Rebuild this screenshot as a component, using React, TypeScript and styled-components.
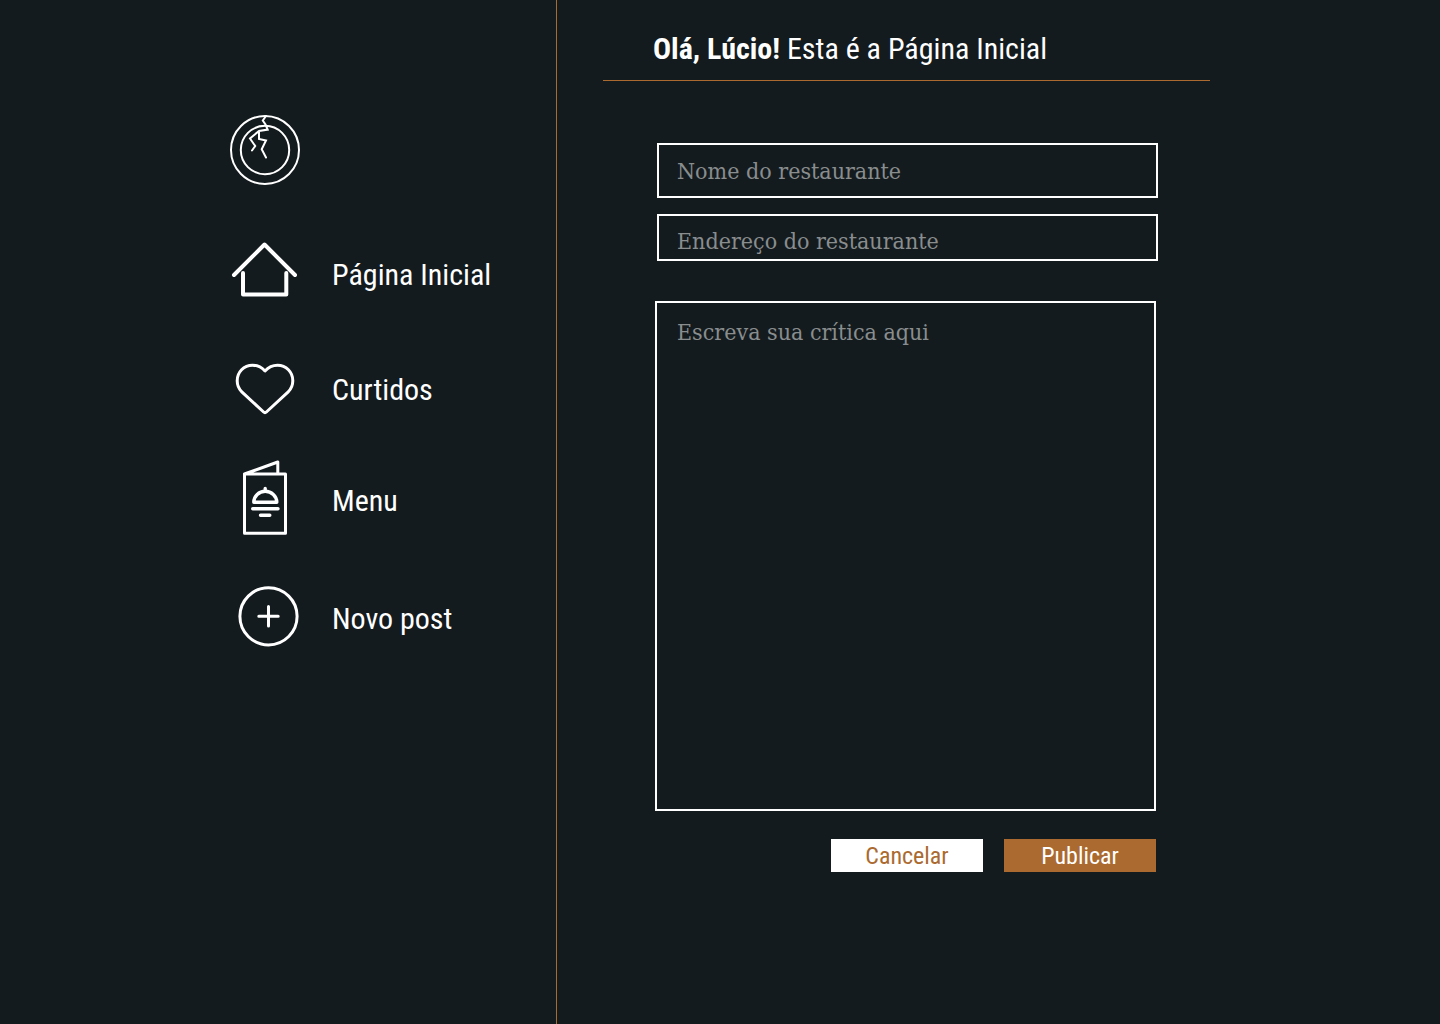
import React from "react";
import styled, { createGlobalStyle, css } from "styled-components";

const colors = {
  background: "#141b1e",
  accent: "#ab6a2f",
  text: "#ffffff",
  placeholder: "#898d8e",
};

const condensed = `"Roboto Condensed", Roboto, "Liberation Sans", sans-serif`;
const slab = `"DejaVu Serif Condensed", "DejaVu Serif", serif`;

const GlobalStyle = createGlobalStyle`
  *, *::before, *::after { box-sizing: border-box; }
  body {
    margin: 0;
    background: ${colors.background};
    color: ${colors.text};
    font-family: ${condensed};
  }
`;

const Page = styled.div`
  display: grid;
  grid-template-columns: minmax(340px, 557fr) minmax(0, 883fr);
  min-height: 100vh;
`;

const Sidebar = styled.aside`
  display: flex;
  flex-direction: column;
  align-items: flex-end;
  padding: 115px 62px 48px 0;
  border-right: 1px solid ${colors.accent};
`;

const SidebarContent = styled.div`
  width: 264px;
`;

const LogoLink = styled.a`
  display: block;
  width: 70px;
  height: 70px;
  margin-bottom: 50px;
`;

const Drawing = styled.svg<{ $weight: number }>`
  display: block;
  flex: none;
  overflow: visible;
  fill: none;
  stroke: ${colors.text};
  stroke-width: ${(p) => p.$weight}px;
  stroke-linecap: round;
  stroke-linejoin: round;
`;

const NavList = styled.ul`
  list-style: none;
  margin: 0;
  padding: 0;
`;

const NavItem = styled.li<{ $after: number }>`
  margin-bottom: ${(p) => p.$after}px;
`;

const NavLink = styled.a`
  display: flex;
  align-items: center;
  gap: 32px;
  height: 80px;
  color: inherit;
  font-size: 30px;
  line-height: 36px;
  text-decoration: none;
  white-space: nowrap;
`;

const Main = styled.main`
  padding: 0 46px 48px;
`;

const Header = styled.header`
  display: flex;
  align-items: center;
  max-width: 607px;
  min-height: 81px;
  padding: 18px 50px 0;
  border-bottom: 1px solid ${colors.accent};
`;

const Title = styled.h1`
  margin: 0;
  font-size: 30px;
  line-height: 36px;
  font-weight: 400;
`;

const Form = styled.form`
  max-width: 555px;
  padding: 62px 0 0 52px;
`;

const Fields = styled.div`
  display: grid;
  gap: 16px;
  margin: 0 0 40px 2px;
`;

const ReviewArea = styled.div`
  margin-right: 2px;
`;

const fieldStyle = css`
  display: block;
  width: 100%;
  border: 2px solid ${colors.text};
  border-radius: 0;
  outline: none;
  background: transparent;
  color: ${colors.text};
  font-family: ${slab};
  font-size: 23px;
  line-height: 32px;

  &::placeholder {
    color: ${colors.placeholder};
    opacity: 1;
  }
`;

const TextField = styled.input<{ $compact?: boolean }>`
  ${fieldStyle}
  height: ${(p) => (p.$compact ? 47 : 55)}px;
  padding: ${(p) => (p.$compact ? "6px 18px 0" : "0 18px")};
`;

const ReviewField = styled.textarea`
  ${fieldStyle}
  height: 510px;
  padding: 13px 20px;
  resize: none;
`;

const Actions = styled.div`
  display: flex;
  justify-content: flex-end;
  gap: 21px;
  margin-top: 28px;
`;

const ActionButton = styled.button<{ $primary?: boolean }>`
  width: 152px;
  height: 33px;
  padding: 0;
  border: 0;
  background: ${(p) => (p.$primary ? colors.accent : colors.text)};
  color: ${(p) => (p.$primary ? colors.text : colors.accent)};
  font-family: ${condensed};
  font-size: 24px;
  line-height: 32px;
  cursor: pointer;
`;

const PlateLogo = () => (
  <Drawing $weight={2} width="70" height="70" viewBox="0 0 70 70" aria-hidden="true">
    <circle cx="35" cy="35" r="34" />
    <circle cx="35" cy="35" r="24.2" />
    <path
      strokeLinejoin="miter"
      d="M36 1 32.8 5.5 35.5 9.5 37.7 14.6 29 16 20 23.5 25.2 31 22 35.5M29 16V24L36 25.5 31.7 34.3 36 42.5"
    />
  </Drawing>
);

const HomeIcon = () => (
  <Drawing $weight={4} width="70" height="80" viewBox="0 0 70 80" aria-hidden="true">
    <path d="M4 40 34.5 9.5 65 40" />
    <path d="M13 38V59.5H56.3V38" />
  </Drawing>
);

const HeartIcon = () => (
  <Drawing $weight={3} width="70" height="80" viewBox="0 0 70 80" aria-hidden="true">
    <path d="M35 21C31.5 17.2 27.3 15.3 22.5 15.3 13.8 15.3 7.2 22.2 7.2 30.8 7.2 35 8.9 39 11.8 41.8L33.6 62Q35 63.3 36.4 62L58.2 41.8C61.1 39 62.8 35 62.8 30.8 62.8 22.2 56.2 15.3 47.5 15.3 42.7 15.3 38.5 17.2 35 21Z" />
  </Drawing>
);

const MenuIcon = () => (
  <Drawing $weight={3} width="70" height="80" viewBox="0 0 70 80" aria-hidden="true">
    <path d="M14.5 13H55.5V72.3H14.5ZM14.5 13 47.8 1V13" />
    <path
      strokeWidth="3.4"
      d="M23.8 41.3C23.8 35 29 30.3 35.2 30.3S46.8 35 46.8 41.3ZM35.2 30V27.5M22.7 47.7H48M30.5 54.3H39.8"
    />
  </Drawing>
);

const NewPostIcon = () => (
  <Drawing $weight={3} width="70" height="80" viewBox="0 0 70 80" aria-hidden="true">
    <circle cx="38.5" cy="37.3" r="28.6" />
    <path d="M28.8 37.3H48.2M38.5 27.6V47" />
  </Drawing>
);

const navigation = [
  { label: "Página Inicial", href: "#inicio", Icon: HomeIcon, after: 35 },
  { label: "Curtidos", href: "#curtidos", Icon: HeartIcon, after: 31 },
  { label: "Menu", href: "#menu", Icon: MenuIcon, after: 38 },
  { label: "Novo post", href: "#novo-post", Icon: NewPostIcon, after: 0 },
];

export default function App() {
  return (
    <>
      <GlobalStyle />
      <Page>
        <Sidebar>
          <SidebarContent>
            <LogoLink href="#inicio" aria-label="Início">
              <PlateLogo />
            </LogoLink>
            <nav>
              <NavList>
                {navigation.map(({ label, href, Icon, after }) => (
                  <NavItem key={label} $after={after}>
                    <NavLink href={href}>
                      <Icon />
                      <span>{label}</span>
                    </NavLink>
                  </NavItem>
                ))}
              </NavList>
            </nav>
          </SidebarContent>
        </Sidebar>
        <Main>
          <Header>
            <Title>
              <strong>Olá, Lúcio!</strong> Esta é a Página Inicial
            </Title>
          </Header>
          <Form onSubmit={(event) => event.preventDefault()}>
            <Fields>
              <TextField
                type="text"
                aria-label="Nome do restaurante"
                placeholder="Nome do restaurante"
              />
              <TextField
                $compact
                type="text"
                aria-label="Endereço do restaurante"
                placeholder="Endereço do restaurante"
              />
            </Fields>
            <ReviewArea>
              <ReviewField
                aria-label="Escreva sua crítica aqui"
                placeholder="Escreva sua crítica aqui"
              />
              <Actions>
                <ActionButton type="button">Cancelar</ActionButton>
                <ActionButton type="submit" $primary>
                  Publicar
                </ActionButton>
              </Actions>
            </ReviewArea>
          </Form>
        </Main>
      </Page>
    </>
  );
}
